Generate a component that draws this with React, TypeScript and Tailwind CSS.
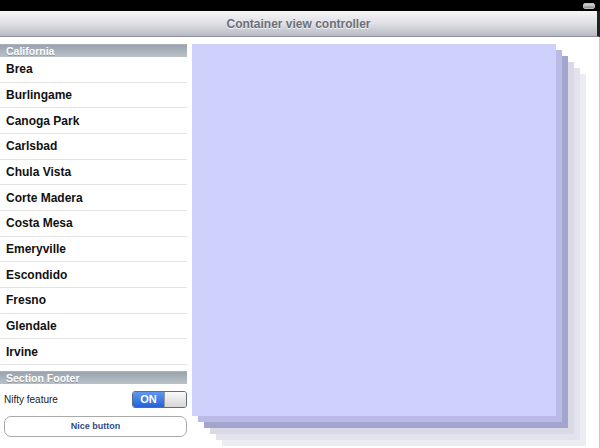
import React from "react";

const cities = [
  "Brea",
  "Burlingame",
  "Canoga Park",
  "Carlsbad",
  "Chula Vista",
  "Corte Madera",
  "Costa Mesa",
  "Emeryville",
  "Escondido",
  "Fresno",
  "Glendale",
  "Irvine",
];

const layers = [
  { off: "left-[30px] top-[30px]", bg: "bg-[#ececf3]" },
  { off: "left-[24px] top-[24px]", bg: "bg-[#e3e3ed]" },
  { off: "left-[18px] top-[18px]", bg: "bg-[#dadae7]" },
  { off: "left-[12px] top-[12px]", bg: "bg-[#a3a5cf]" },
  { off: "left-[6px] top-[6px]", bg: "bg-[#b9bbe6]" },
  { off: "left-0 top-0", bg: "bg-[#cfd1fd]" },
];

function SectionHeader({ title }: { title: string }) {
  return (
    <div className="h-[13px] shrink-0 flex items-center pl-[6px] bg-gradient-to-b from-[#9aa4ae] to-[#bac1c8] border-t border-[#a9b2ba]">
      <span className="text-[10.5px] font-bold leading-none text-white [text-shadow:0_1px_0_rgba(0,0,0,0.25)]">
        {title}
      </span>
    </div>
  );
}

export default function App() {
  return (
    <div className="w-[600px] h-[448px] bg-white overflow-hidden flex flex-col font-['Liberation_Sans',Arial,sans-serif]">
      {/* status bar */}
      <div className="h-[11px] shrink-0 bg-black flex justify-end items-center pr-[5px]">
        <div className="w-[12px] h-[6px] rounded-[2px] bg-gradient-to-b from-[#d8d8d8] to-[#8e8e8e] border border-[#bbbbbb]" />
      </div>

      {/* navigation bar */}
      <div className="h-[26px] shrink-0 flex items-center justify-center bg-gradient-to-b from-[#f6f6f8] via-[#dfe0e5] to-[#b7bac4] border-b border-[#8c8f9a] border-r-[3px] border-r-[#222]">
        <span className="text-[12px] font-bold text-[#6b6e76] [text-shadow:0_1px_0_rgba(255,255,255,0.8)]">
          Container view controller
        </span>
      </div>

      <div className="flex flex-1 min-h-0 border-r border-[#c8c8c8]">
        {/* table on the left */}
        <div className="w-[187px] shrink-0 pt-[7px] flex flex-col">
          <SectionHeader title="California" />
          {cities.map((c) => (
            <div
              key={c}
              className="h-[25.67px] shrink-0 flex items-center pl-[6px] border-b border-[#e3e3e3]"
            >
              <span className="text-[12px] font-bold text-[#111]">{c}</span>
            </div>
          ))}
          <div className="h-[6px] shrink-0" />
          <SectionHeader title="Section Footer" />

          <div className="h-[32px] shrink-0 flex items-center justify-between pl-[4px]">
            <span className="text-[10px] text-[#222]">Nifty feature</span>
            <div className="w-[55px] h-[17px] flex rounded-[3px] border border-[#5b6c88] overflow-hidden">
              <div className="w-[31px] flex items-center justify-center bg-gradient-to-b from-[#5f97ee] to-[#2363d8]">
                <span className="text-[11px] font-bold text-white leading-none">ON</span>
              </div>
              <div className="flex-1 bg-gradient-to-b from-[#fafafa] to-[#d6d6d6] border-l border-[#9a9a9a]" />
            </div>
          </div>

          <div className="ml-[4px] h-[21px] shrink-0 flex items-center justify-center rounded-[7px] border border-[#a9a9a9] bg-white">
            <span className="text-[9px] font-bold text-[#2f4a86]">Nice button</span>
          </div>
        </div>

        {/* stacked content */}
        <div className="flex-1 pl-[5px] pt-[7px]">
          <div className="relative w-[400px] h-[402px]">
            {layers.map((l, i) => (
              <div key={i} className={`absolute ${l.off} ${l.bg} w-[364px] h-[372px]`} />
            ))}
          </div>
        </div>
      </div>
    </div>
  );
}
